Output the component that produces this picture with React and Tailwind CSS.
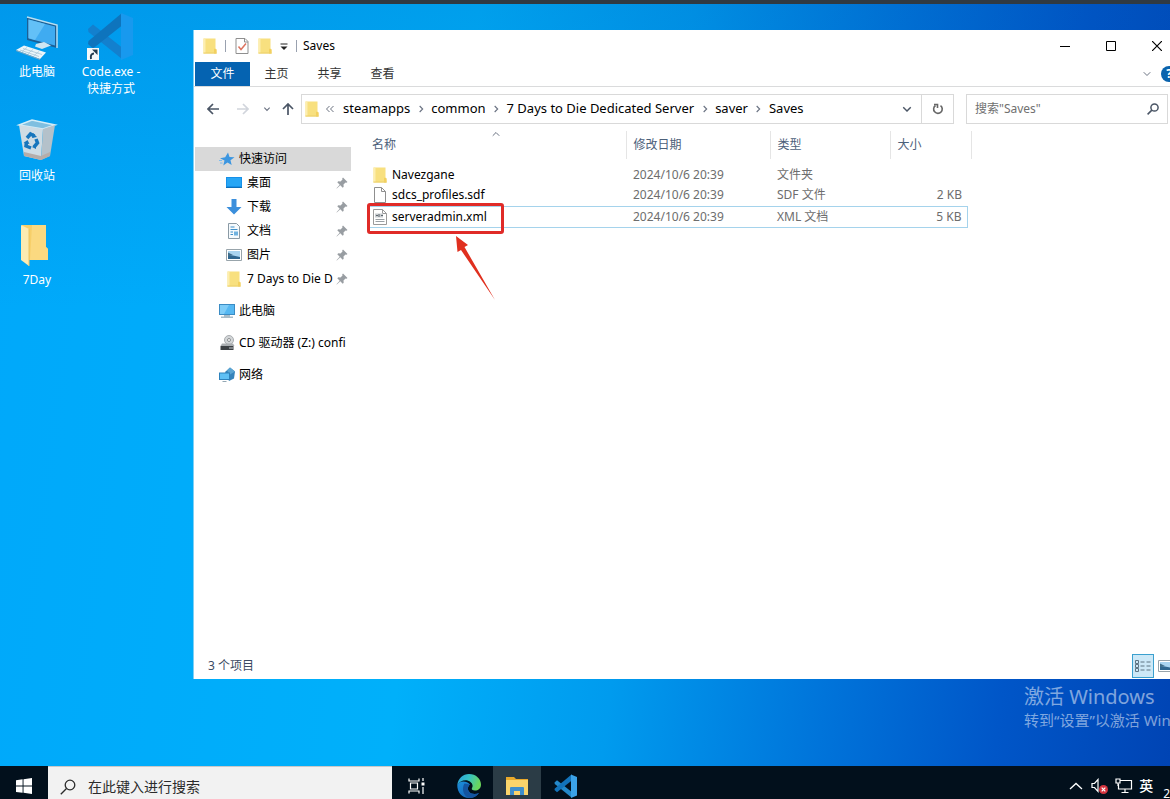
/**
 * @file App.jsx
 * @description Remote Windows desktop with an Explorer window open on the Saves folder.
 *
 * Component tree:
 *  <App>
 *    <DesktopIcons>
 *    <ExplorerWindow>   — TitleBar, RibbonTabs, AddressRow, Sidebar, FileTable, StatusBar
 *    <Taskbar>
 */

import React from 'react';
import { FiChevronUp, FiChevronDown } from 'react-icons/fi';

// ---------------------------------------------------------------------------
// Data
// ---------------------------------------------------------------------------

const CRUMBS = ['steamapps', 'common', '7 Days to Die Dedicated Server', 'saver', 'Saves'];

const FILES = [
  { name: 'Navezgane',        date: '2024/10/6 20:39', type: '文件夹',   size: '',     icon: FolderIcon },
  { name: 'sdcs_profiles.sdf', date: '2024/10/6 20:39', type: 'SDF 文件', size: '2 KB', icon: PageIcon },
  { name: 'serveradmin.xml',  date: '2024/10/6 20:39', type: 'XML 文档', size: '5 KB', icon: XmlIcon, selected: true },
];

const QUICK_LINKS = [
  { label: '桌面', icon: DesktopIcon },
  { label: '下载', icon: DownloadIcon },
  { label: '文档', icon: DocumentIcon },
  { label: '图片', icon: PictureIcon },
  { label: '7 Days to Die D', icon: FolderIcon },
];

const ROOT_LINKS = [
  { label: '此电脑', icon: MonitorIcon },
  { label: 'CD 驱动器 (Z:) confi', icon: DriveIcon },
  { label: '网络', icon: NetworkIcon },
];

// ---------------------------------------------------------------------------
// Small icons
// ---------------------------------------------------------------------------

function FolderIcon() {
  return (
    <svg viewBox="0 0 16 16" className="h-4 w-4 shrink-0" aria-hidden="true">
      <path d="M1.5.5h12v10l1 1v4h-13z" fill="#f8e07f" />
      <path d="M1.5.5h2v15h-2z" fill="#fdeeb0" />
      <path d="M12.500 10.500l2 1v4h-2.500v-4z" fill="#f3d05f" />
      <path d="M1.500 15h13" stroke="#ecd06a" strokeWidth="1" />
    </svg>
  );
}

function PageIcon() {
  return (
    <svg viewBox="0 0 16 16" className="h-4 w-4 shrink-0" aria-hidden="true">
      <path d="M2.500.5h7l4 4v11h-11z" fill="#fff" stroke="#8f8f8f" />
      <path d="M9.500.5v4h4" fill="none" stroke="#8f8f8f" />
    </svg>
  );
}

function XmlIcon() {
  return (
    <svg viewBox="0 0 16 16" className="h-4 w-4 shrink-0" aria-hidden="true">
      <path d="M1.500.5h9l4 4v11h-13z" fill="#fff" stroke="#9a9a9a" />
      <path d="M10.500.5v4h4" fill="none" stroke="#9a9a9a" />
      <path d="M3 4.500h8v4H3z" fill="#c9cdd0" />
      <path d="M4 6.500h2M7 5v3M9 6.500h2" stroke="#5c666e" />
      <path d="M3.500 10.500h9M3.500 12.500h9" stroke="#9aa0a5" />
    </svg>
  );
}

function CheckPageIcon() {
  return (
    <svg viewBox="0 0 16 16" className="h-4 w-4 shrink-0" aria-hidden="true">
      <path d="M2 .5h9l3 3v12h-12z" fill="#fff" stroke="#8f8f8f" />
      <path d="M10.500.5v3.500h3.500" fill="none" stroke="#8f8f8f" />
      <path d="M4.500 8.500l2.500 3 5-6" fill="none" stroke="#dd7460" strokeWidth="1.500" />
    </svg>
  );
}

function DesktopIcon() {
  return (
    <svg viewBox="0 0 16 16" className="h-4 w-4 shrink-0" aria-hidden="true">
      <path d="M0 2h16v11H0z" fill="#1690e8" />
      <path d="M1 3h14v8H1z" fill="#27a6f5" />
      <path d="M0 12.500h16" stroke="#0c6fb9" strokeWidth="1" />
    </svg>
  );
}

function DownloadIcon() {
  return (
    <svg viewBox="0 0 16 16" className="h-4 w-4 shrink-0" aria-hidden="true">
      <path d="M5.500 0h5v8h5L8 15.500.5 8h5z" fill="#3b8fdc" />
    </svg>
  );
}

function DocumentIcon() {
  return (
    <svg viewBox="0 0 16 16" className="h-4 w-4 shrink-0" aria-hidden="true">
      <path d="M2.500.5h8l3 3v12h-11z" fill="#f5fafd" stroke="#8b9aa5" />
      <path d="M4.500 4h4M4.500 6.500h7M4.500 9h2.500M4.500 11.500h2.500" stroke="#3f8fc9" />
      <path d="M8 8.500h4v4H8z" fill="#6fb2e0" />
    </svg>
  );
}

function PictureIcon() {
  return (
    <svg viewBox="0 0 16 16" className="h-4 w-4 shrink-0" aria-hidden="true">
      <path d="M.5 2.500h15v11H.5z" fill="#fff" stroke="#98a4ab" />
      <path d="M2 4h12v8H2z" fill="#a9d4f0" />
      <path d="M2 8l5 .5 7 1.500v2H2z" fill="#2f6790" />
      <path d="M2 5.500l5 2.500-5 1z" fill="#3f6d89" />
    </svg>
  );
}

function MonitorIcon() {
  return (
    <svg viewBox="0 0 16 16" className="h-4 w-4 shrink-0" aria-hidden="true">
      <path d="M0 1h16v11H0z" fill="#3b8cc4" />
      <path d="M1 2h14v9H1z" fill="#56b8f2" />
      <path d="M1 2h9l-5 9H1z" fill="#7fcdf8" />
      <path d="M5 12h6v1.500h3v1.500H2v-1.500h3z" fill="#a8bcc8" />
    </svg>
  );
}

function DriveIcon() {
  return (
    <svg viewBox="0 0 16 16" className="h-4 w-4 shrink-0" aria-hidden="true">
      <circle cx="10" cy="5" r="4.500" fill="#d3d6d8" stroke="#a9adb0" />
      <circle cx="10" cy="5" r="1.500" fill="#fff" stroke="#8a8e90" />
      <path d="M3 8.500h11l1.500 2.500H1.500z" fill="#a9adb0" />
      <path d="M1.500 11h13v4h-13z" fill="#3d4144" />
      <path d="M10 13h4" stroke="#c2c8cc" />
    </svg>
  );
}

function NetworkIcon() {
  return (
    <svg viewBox="0 0 16 16" className="h-4 w-4 shrink-0" aria-hidden="true">
      <path d="M6 5l5-4.500 5 4-1 7-5 2.500z" fill="#3684bb" />
      <path d="M11 .5l5 4-5 3-3-4z" fill="#5ba5d3" />
      <path d="M0 5.500h11v7.500H0z" fill="#2d82bd" />
      <path d="M1 6.500h9v5.500H1z" fill="#5fc0f5" />
      <path d="M3.500 14.500h4" stroke="#94a8b4" strokeWidth="1" />
    </svg>
  );
}

function PinIcon() {
  return (
    <svg viewBox="0 0 12 12" className="h-3 w-3 shrink-0" aria-hidden="true">
      <path d="M7 .5l4.500 4.500-1 .8-1-.3-2 2 .2 2.200-1 1L4.300 8.300.8 11.500.5 11.200 3.700 7.700 1.300 5.300l1-1 2.200.2 2-2-.3-1z" fill="#989da2" />
    </svg>
  );
}

function StarIcon() {
  return (
    <svg viewBox="0 0 16 16" className="h-4 w-4 shrink-0" aria-hidden="true">
      <path d="M9 1.500l1.500 4.500 5 .3-4 3 1.200 4.700-4.200-2.500L4.300 14.500l1.200-5-4.500-2.200 5.200-1z" fill="#3c96e0" />
      <path d="M0 9.500h3M1 12h2.500" stroke="#7dbcf0" />
    </svg>
  );
}

function ArrowIcon({ className, d }) {
  return (
    <svg viewBox="0 0 12 12" className={className} fill="none" stroke="currentColor" strokeWidth="1.700" aria-hidden="true">
      <path d={d} />
    </svg>
  );
}

function MagnifierIcon({ className, strokeWidth }) {
  return (
    <svg viewBox="0 0 16 16" className={className} fill="none" stroke="currentColor" strokeWidth={strokeWidth} aria-hidden="true">
      <circle cx="10" cy="6" r="4.800" />
      <path d="M6.500 9.500L.8 15.200" />
    </svg>
  );
}

function VsCodeIcon({ className, dark, mid, light }) {
  return (
    <svg viewBox="0 0 48 48" className={className} aria-hidden="true">
      <path d="M1 17l5-4.500 29 23V47L1.500 20z" fill={mid} />
      <path d="M1 32l5 4.500 29-23V1L1.500 29z" fill={dark} />
      <path d="M34 1l12 5v37l-12 5z" fill={light} />
    </svg>
  );
}

// ---------------------------------------------------------------------------
// Desktop
// ---------------------------------------------------------------------------

function ComputerArt() {
  return (
    <svg viewBox="0 0 48 48" className="h-12 w-12" aria-hidden="true">
      <path d="M14 5l30 8v23l-30-8z" fill="#1c5f95" />
      <path d="M14 5l30 8v23" fill="none" stroke="#b8dff2" strokeWidth="1.500" />
      <path d="M15.500 7.500L42 14.500v19l-26.500-7z" fill="#3fabf1" />
      <path d="M15.500 7.500L32 12 22 28l-6.500-2z" fill="#63c0f7" />
      <path d="M23 32l8-2 7 3.500-9 3.500-7-2.500z" fill="#cfe6f2" />
      <path d="M3 38l8-4.500 22 7-6 6.500z" fill="#eaf5fa" />
      <path d="M3 38l24 9v1L3 39z" fill="#82a9c0" />
      <path d="M7 38l19 6.500M10 36.500l19 6M9 39.500l5-4M15 41.500l5-4M21 43.500l5-4" stroke="#a8c7d8" strokeWidth=".8" />
    </svg>
  );
}

function RecycleArt() {
  return (
    <svg viewBox="0 0 48 48" className="h-12 w-12" aria-hidden="true">
      <path d="M6 9l13-5 23 5-12 4z" fill="#7fbfe0" stroke="#d3edf8" strokeWidth="1.500" />
      <path d="M6 9l24 4-2 31-17-4z" fill="#cfdce4" />
      <path d="M30 13l12-4-5 31-9 4z" fill="#b4c1ca" />
      <path d="M11 36l17 4 9-4v4l-9 4-17-4z" fill="#b5adaa" />
      <g fill="none" stroke="#1776bd" strokeWidth="3.500">
        <path d="M14 22l3.500-4 4 2" />
        <path d="M23 23l1.500 4-3.500 4" />
        <path d="M18 32l-5-2 .5-4" />
      </g>
      <path d="M20 17l4 4-5 1zM23 33l-4-2 4-3zM10.500 27l4-3 2 4z" fill="#1776bd" />
    </svg>
  );
}

function BigFolderArt() {
  return (
    <svg viewBox="0 0 48 48" className="h-12 w-12" aria-hidden="true">
      <path d="M9 5h24v22l2 2v11H9z" fill="#f7cf69" />
      <path d="M19 5h14v22l2 2v11H17z" fill="#fbd980" />
      <path d="M8 5l8 4v37l-8-6z" fill="#fdebb2" />
      <path d="M16 9v37" stroke="#edc465" />
    </svg>
  );
}

function ShortcutArt() {
  return (
    <div className="relative">
      <VsCodeIcon className="h-12 w-12" dark="#0e74bd" mid="#1380ce" light="#1899ee" />
      <svg viewBox="0 0 12 12" className="absolute bottom-0 left-0 h-3 w-3" aria-hidden="true">
        <path d="M0 0h12v12H0z" fill="#f4f8fa" />
        <path d="M4 11c-1-4 1-5.500 3-5.500" fill="none" stroke="#233c50" strokeWidth="2" />
        <path d="M5 1.500h5.500V7z" fill="#233c50" />
      </svg>
    </div>
  );
}

function DesktopItem({ art, children }) {
  return (
    <button className="flex h-[104px] w-[74px] flex-col items-center gap-[3px] text-xs leading-[17px] text-white">
      {art}
      <span className="text-center">{children}</span>
    </button>
  );
}

function DesktopIcons() {
  return (
    <div className="flex pt-2">
      <div className="flex flex-col">
        <DesktopItem art={<ComputerArt />}>此电脑</DesktopItem>
        <DesktopItem art={<RecycleArt />}>回收站</DesktopItem>
        <DesktopItem art={<BigFolderArt />}>7Day</DesktopItem>
      </div>
      <DesktopItem art={<ShortcutArt />}>
        Code.exe -<br />快捷方式
      </DesktopItem>
    </div>
  );
}

// ---------------------------------------------------------------------------
// Explorer window
// ---------------------------------------------------------------------------

function TitleBar() {
  return (
    <header className="flex h-8 shrink-0 items-center">
      <div className="flex items-center pl-2">
        <FolderIcon />
        <span className="ml-[7px] h-3 w-px bg-gray-400" />
        <button className="ml-2" aria-label="属性"><CheckPageIcon /></button>
        <button className="ml-[7px]" aria-label="新建文件夹"><FolderIcon /></button>
        <button className="ml-[3px] w-4" aria-label="自定义快速访问工具栏">
          <svg viewBox="0 0 16 16" className="h-4 w-4" aria-hidden="true">
            <path d="M4.500 6h7" stroke="#222" />
            <path d="M4.500 8.500h7L8 12z" fill="#222" />
          </svg>
        </button>
        <span className="ml-1 h-3 w-px bg-gray-400" />
      </div>
      <h1 className="ml-1.5 flex-1 text-xs text-black">Saves</h1>
      <div className="-mr-2.5 flex">
        <button className="flex h-8 w-[46px] items-center justify-center" aria-label="最小化">
          <svg viewBox="0 0 10 10" className="h-2.5 w-2.5" aria-hidden="true"><path d="M0 5.500h10" stroke="#000" /></svg>
        </button>
        <button className="flex h-8 w-[46px] items-center justify-center" aria-label="最大化">
          <svg viewBox="0 0 10 10" className="h-2.5 w-2.5" aria-hidden="true"><path d="M.5.5h9v9h-9z" fill="none" stroke="#000" /></svg>
        </button>
        <button className="flex h-8 w-[46px] items-center justify-center" aria-label="关闭">
          <svg viewBox="0 0 10 10" className="h-2.5 w-2.5" aria-hidden="true"><path d="M0 0l10 10M10 0L0 10" stroke="#000" strokeWidth="1.200" /></svg>
        </button>
      </div>
    </header>
  );
}

function RibbonTabs() {
  return (
    <nav className="flex h-[25px] shrink-0 items-center border-b border-[#dadbdc] text-xs text-[#333]">
      <button className="ml-px h-full w-[55px] bg-[#0563b1] text-white">文件</button>
      <button className="w-[53px]">主页</button>
      <button className="w-[53px]">共享</button>
      <button className="w-[53px]">查看</button>
      <div className="-mr-[7px] ml-auto flex items-center gap-2">
        <button aria-label="展开功能区"><FiChevronDown className="h-3 w-3 text-gray-500" /></button>
        <button className="h-4 w-4 rounded-full bg-[#0a63ad] text-xs leading-4 font-bold text-white">?</button>
      </div>
    </nav>
  );
}

function Chevron() {
  return (
    <span className="flex w-[21px] shrink-0 justify-center">
      <ArrowIcon className="h-2 w-2 text-gray-500" d="M4 1.500l4.500 4.500L4 10.500" />
    </span>
  );
}

function AddressRow() {
  return (
    <div className="flex h-11 shrink-0 items-center pr-0.5 text-xs">
      <div className="flex w-[107px] shrink-0 items-center">
        <button className="ml-[13px]" aria-label="返回">
          <ArrowIcon className="h-3 w-3 text-gray-600" d="M12 6H1M6 1L1 6l5 5" />
        </button>
        <button className="ml-[18px]" aria-label="前进">
          <ArrowIcon className="h-3 w-3 text-gray-300" d="M0 6h11M6 1l5 5-5 5" />
        </button>
        <button className="ml-[14px]" aria-label="最近浏览的位置">
          <ArrowIcon className="h-2 w-2 text-gray-500" d="M2 4l4 4 4-4" />
        </button>
        <button className="ml-[11px]" aria-label="上移">
          <ArrowIcon className="h-3 w-3 text-gray-600" d="M6 12V1M1 6l5-5 5 5" />
        </button>
      </div>
      <div className="flex h-[30px] min-w-0 flex-1 items-center border border-[#d9d9d9]">
        <span className="ml-[2px]"><FolderIcon /></span>
        <svg viewBox="0 0 10 8" className="ml-[5px] h-2 w-2.5 shrink-0" fill="none" stroke="#6b7280" aria-hidden="true">
          <path d="M4.500 1L1.500 4l3 3M8.500 1l-3 3 3 3" />
        </svg>
        <div className="ml-2 flex min-w-0 flex-1 items-center text-[13px] whitespace-nowrap text-black">
          {CRUMBS.map((crumb, i) => (
            <React.Fragment key={crumb}>
              {i > 0 && <Chevron />}
              <button>{crumb}</button>
            </React.Fragment>
          ))}
        </div>
        <button className="flex w-7 justify-center" aria-label="以前的位置">
          <ArrowIcon className="h-2.5 w-2.5 text-gray-600" d="M1.500 4L6 8.500 10.500 4" />
        </button>
        <button className="flex h-full w-8 items-center justify-center border-l border-[#d9d9d9]" aria-label="刷新">
          <svg viewBox="0 0 12 12" className="h-3 w-3" fill="none" stroke="#666" strokeWidth="1.600" aria-hidden="true">
            <path d="M8.500 2.600A4.300 4.300 0 1 1 3.500 2.500" />
            <path d="M2 1.500h3.500V5" />
          </svg>
        </button>
      </div>
      <label className="ml-3 flex h-[30px] w-[202px] shrink-0 items-center border border-[#d9d9d9] pr-2 pl-2">
        <input
          type="search"
          aria-label="搜索"
          placeholder={'搜索"Saves"'}
          className="min-w-0 flex-1 outline-none placeholder:text-[#707070]"
        />
        <MagnifierIcon className="h-3 w-3 text-gray-600" strokeWidth="2" />
      </label>
    </div>
  );
}

function Sidebar() {
  return (
    <aside className="w-[157px] shrink-0 pt-4 pl-px text-xs whitespace-nowrap text-black">
      <a href="#quick" className="flex h-6 items-center gap-1 bg-[#d9d9d9] pl-6">
        <StarIcon />快速访问
      </a>
      <ul>
        {QUICK_LINKS.map(({ label, icon: Icon }) => (
          <li key={label}>
            <a href="#folder" className="flex h-6 items-center pr-[3px] pl-[31px]">
              <Icon />
              <span className="ml-[5px] min-w-0 flex-1">{label}</span>
              <PinIcon />
            </a>
          </li>
        ))}
      </ul>
      <ul className="mt-2 flex flex-col gap-2">
        {ROOT_LINKS.map(({ label, icon: Icon }) => (
          <li key={label}>
            <a href="#root" className="flex h-6 items-center gap-1 pl-6">
              <Icon />
              <span>{label}</span>
            </a>
          </li>
        ))}
      </ul>
    </aside>
  );
}

/** Red frame and arrow drawn over the file to edit. */
function Callout() {
  return (
    <span className="pointer-events-none absolute -top-1 left-0 block h-[31px] w-[137px] rounded-[3px] border-3 border-[#e02b28]">
      <svg viewBox="0 0 42 64" className="absolute top-[30px] left-[84px] h-16 w-[42px]" aria-hidden="true">
        <path d="M2 0l12 9-3.500 2L41 64 7 14 3.500 16z" fill="#e0301f" />
      </svg>
    </span>
  );
}

function FileTable() {
  return (
    <main className="min-w-0 flex-1 pl-4">
      <table className="w-[604px] table-fixed text-left text-xs">
        <colgroup>
          <col className="w-[259px]" />
          <col className="w-[144px]" />
          <col className="w-[120px]" />
          <col className="w-[77px]" />
          <col className="w-1" />
        </colgroup>
        <thead className="text-[#4c607a]">
          <tr className="h-7">
            <th className="relative border-r border-[#e5e5e5] pl-[5px] font-normal">
              名称
              <FiChevronUp className="absolute -top-[3px] left-[123px] h-3 w-3 text-gray-500" />
            </th>
            <th className="border-r border-[#e5e5e5] pl-[7px] font-normal">修改日期</th>
            <th className="border-r border-[#e5e5e5] pl-[7px] font-normal">类型</th>
            <th colSpan={2} className="border-r border-[#e5e5e5] pl-[7px] font-normal">大小</th>
          </tr>
        </thead>
        <tbody className="text-[#6d6d6d]">
          <tr className="h-[5px]" aria-hidden="true"><td colSpan={5} /></tr>
          {FILES.map(({ name, date, type, size, icon: Icon, selected }) => {
            const edge = selected ? 'border-y border-[#a5d3ec]' : '';
            return (
              <tr key={name} className="h-[21px]">
                <td className={`relative py-0 pl-[5px] text-black ${edge}`}>
                  <span className="flex items-center gap-1">
                    <Icon />
                    {name}
                  </span>
                  {selected && <Callout />}
                </td>
                <td className={`py-0 pl-[7px] ${edge}`}>{date}</td>
                <td className={`py-0 pl-[7px] ${edge}`}>{type}</td>
                <td className={`py-0 pr-[5px] text-right ${edge} ${selected ? 'border-r' : ''}`}>{size}</td>
                <td />
              </tr>
            );
          })}
        </tbody>
      </table>
    </main>
  );
}

function StatusBar() {
  return (
    <footer className="flex h-[26px] shrink-0 items-center pl-3.5 text-xs text-[#3b4a63]">
      <span className="flex-1">3 个项目</span>
      <div className="-mr-1.5 flex items-center gap-1">
        <button className="flex h-6 w-[22px] items-center justify-center border border-[#3ba0cf] bg-[#cce8f7]" aria-label="详细信息">
          <svg viewBox="0 0 16 14" className="h-3.5 w-4" fill="none" stroke="#5e7482" aria-hidden="true">
            <path d="M.5 1.500h3v3h-3zM.5 5.500h3v3h-3zM.5 9.500h3v3h-3zM5.500 3h4M11.500 3h4M5.500 7h4M11.500 7h4M5.500 11h4M11.500 11h4" />
          </svg>
        </button>
        <button className="flex w-[18px] items-center" aria-label="大图标"><PictureIcon /></button>
      </div>
    </footer>
  );
}

function ExplorerWindow() {
  return (
    <section className="absolute top-[26px] right-0 bottom-[87px] left-[193px] flex flex-col overflow-hidden border-l border-[#7fd0f5] bg-white">
      <TitleBar />
      <RibbonTabs />
      <AddressRow />
      <div className="flex min-h-0 flex-1">
        <Sidebar />
        <FileTable />
      </div>
      <StatusBar />
    </section>
  );
}

// ---------------------------------------------------------------------------
// Taskbar
// ---------------------------------------------------------------------------

function EdgeLogo() {
  return (
    <svg viewBox="0 0 24 24" className="h-6 w-6" aria-hidden="true">
      <defs>
        <linearGradient id="edgeTop" x1="0" y1="0" x2="1" y2="0.3">
          <stop offset="0" stopColor="#2a9fe0" />
          <stop offset="0.5" stopColor="#35c1c5" />
          <stop offset="1" stopColor="#6ad65c" />
        </linearGradient>
        <linearGradient id="edgeBody" x1="0" y1="0" x2="0.6" y2="1">
          <stop offset="0" stopColor="#1b8fdc" />
          <stop offset="1" stopColor="#1565b8" />
        </linearGradient>
      </defs>
      <path d="M.3 11C0 18 5 24 12 24c4.500 0 8-2 10-5-3 1.500-8 1.500-10-1.500-2-2.800-.8-5.500 1-7C10 6.500 2 6 .3 11z" fill="url(#edgeBody)" />
      <path d="M7.500 9.500C4.500 14 6 22 12 24c4.500 0 8-2 10-5-3 1.500-8 1.500-10-1.500-2-2.800-.8-5.500 1-7z" fill="#14549f" />
      <path d="M.3 11C1 4.500 6 0 12 0c7 0 12 5 12 10.500 0 4-3 6-6 6-2.500 0-4-1-3-2.500 1-1.500 1-4-1.500-6C10 5 3 6 .3 11z" fill="url(#edgeTop)" />
    </svg>
  );
}

function Taskbar() {
  return (
    <footer className="flex h-[33px] shrink-0 items-start overflow-hidden bg-[#02101c] text-white">
      <button className="flex h-10 w-12 shrink-0 items-center justify-center" aria-label="开始">
        <svg viewBox="0 0 16 16" className="h-4 w-4" fill="#fff" aria-hidden="true">
          <path d="M0 2.200L6.600 1.300v6.300H0zM7.500 1.200L16 0v7.600H7.500zM0 8.500h6.600v6.300L0 13.900zM7.500 8.500H16V16l-8.500-1.200z" />
        </svg>
      </button>
      <label className="flex h-10 w-[344px] shrink-0 items-center gap-3 border-t border-[#c9c9c9] bg-[#f2f2f2] px-3 text-[#2b2b2b]">
        <MagnifierIcon className="h-4 w-4" strokeWidth="1.300" />
        <input
          type="text"
          aria-label="在此键入进行搜索"
          placeholder="在此键入进行搜索"
          className="min-w-0 flex-1 text-sm outline-none placeholder:text-[#2b2b2b]"
        />
      </label>
      <button className="ml-px flex h-10 w-12 items-center justify-center" aria-label="任务视图">
        <svg viewBox="0 0 18 16" className="h-4 w-[18px]" fill="none" stroke="#fff" strokeWidth="1.200" aria-hidden="true">
          <path d="M1 .5v2.500h10V.5M1 15.500V13h10v2.500M2.500 5h7v6h-7zM15 0v3M15 9v7" />
          <path d="M13.500 4.500h3v3h-3z" fill="#fff" stroke="none" />
        </svg>
      </button>
      <button className="ml-1 flex h-10 w-12 items-center justify-center" aria-label="Microsoft Edge"><EdgeLogo /></button>
      <button className="flex h-10 w-12 items-center justify-center bg-[#2b3c46]" aria-label="文件资源管理器">
        <svg viewBox="0 0 24 20" className="h-5 w-6" aria-hidden="true">
          <path d="M1 1h8l2 2h12v5H1z" fill="#e9a92c" />
          <path d="M1 4h22v15H1z" fill="#fbd56b" />
          <path d="M5 19v-7q0-1 1-1h12q1 0 1 1v7h-4v-4H9v4z" fill="#3f8fcb" />
        </svg>
      </button>
      <button className="ml-px flex h-10 w-12 items-center justify-center" aria-label="Visual Studio Code">
        <VsCodeIcon className="h-6 w-6" dark="#1273ba" mid="#2489ca" light="#3ba2e8" />
      </button>
      <div className="ml-auto flex h-10 items-center">
        <button aria-label="显示隐藏的图标">
          <svg viewBox="0 0 14 8" className="h-2 w-3.5" fill="none" stroke="#fff" strokeWidth="1.300" aria-hidden="true"><path d="M1 7l6-5.500L13 7" /></svg>
        </button>
        <button className="ml-2" aria-label="音量">
          <svg viewBox="0 0 18 16" className="h-4 w-[18px]" aria-hidden="true">
            <path d="M1 5.500h2.500L7 1.500v12l-3.500-4H1z" fill="none" stroke="#fff" strokeWidth="1.200" />
            <circle cx="12.500" cy="11.500" r="4.500" fill="#d6343f" />
            <path d="M10.700 9.700l3.600 3.600M14.300 9.700l-3.600 3.600" stroke="#fff" strokeWidth="1.200" />
          </svg>
        </button>
        <button className="ml-1.5" aria-label="网络">
          <svg viewBox="0 0 18 16" className="h-4 w-[18px]" fill="none" stroke="#fff" strokeWidth="1.200" aria-hidden="true">
            <path d="M5 2.500h11.500v8.500H3.500V6M10 11v3M6.500 14.500h7M1 1h4v4H1zM3 5v3" />
          </svg>
        </button>
        <button className="ml-1.5 text-sm font-medium">英</button>
        <span className="ml-2.5 self-start pt-5 text-xs">2</span>
      </div>
    </footer>
  );
}

// ---------------------------------------------------------------------------
// App
// ---------------------------------------------------------------------------

export default function App() {
  return (
    <div className='flex h-screen flex-col overflow-hidden font-["Noto_Sans","Noto_Sans_CJK_SC",sans-serif] select-none'>
      <div className="h-1 shrink-0 bg-[#303a42]" />
      <div className="relative min-h-0 flex-1 overflow-hidden bg-[linear-gradient(to_bottom,rgba(0,80,170,0.18),rgba(0,80,170,0)_40%),linear-gradient(97deg,#00a8fa_0%,#00b0fa_38%,#009bee_55%,#0074da_72%,#0056c8_86%,#0044b4_100%)]">
        <DesktopIcons />
        <ExplorerWindow />
        <div className="absolute right-0 bottom-9 w-[146px] whitespace-nowrap text-white/50">
          <p className="text-xl leading-[26px]">激活 Windows</p>
          <p className="text-[15px] leading-5">转到“设置”以激活 Win</p>
        </div>
      </div>
      <Taskbar />
    </div>
  );
}
